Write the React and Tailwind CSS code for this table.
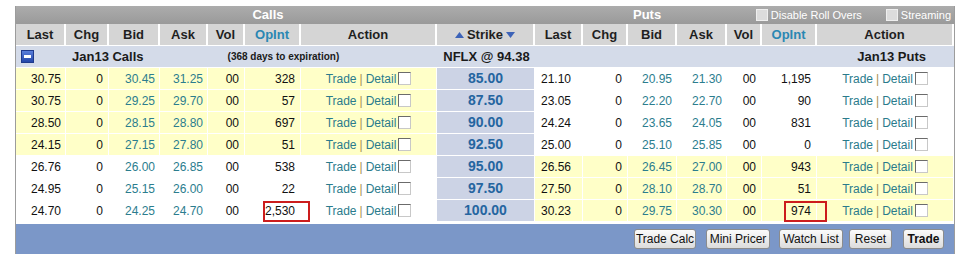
import React from "react";

const cols =
  "grid grid-cols-[50px_43px_51px_48px_37px_56px_136px_98px_48px_45px_49px_50px_35px_55px_137px]";

const calls = [
  ["30.75", "0", "30.45", "31.25", "00", "328"],
  ["30.75", "0", "29.25", "29.70", "00", "57"],
  ["28.50", "0", "28.15", "28.80", "00", "697"],
  ["24.15", "0", "27.15", "27.80", "00", "51"],
  ["26.76", "0", "26.00", "26.85", "00", "538"],
  ["24.95", "0", "25.15", "26.00", "00", "22"],
  ["24.70", "0", "24.25", "24.70", "00", "2,530"],
];

const strikes = ["85.00", "87.50", "90.00", "92.50", "95.00", "97.50", "100.00"];

const puts = [
  ["21.10", "0", "20.95", "21.30", "00", "1,195"],
  ["23.05", "0", "22.20", "22.70", "00", "90"],
  ["24.24", "0", "23.65", "24.05", "00", "831"],
  ["25.00", "0", "25.10", "25.85", "00", "0"],
  ["26.56", "0", "26.45", "27.00", "00", "943"],
  ["27.50", "0", "28.10", "28.70", "00", "51"],
  ["30.23", "0", "29.75", "30.30", "00", "974"],
];

function Box() {
  return (
    <span className="inline-block w-[13px] h-[13px] bg-white border border-t-[#6b6b6b] border-l-[#6b6b6b] border-r-[#c8c8c8] border-b-[#c8c8c8] ml-[2px]" />
  );
}

function Action({ bg }) {
  return (
    <div
      className={`${bg} border-r border-b border-white flex items-center justify-center text-[12px] text-[#2a7b8c]`}
    >
      <span>Trade</span>
      <span className="text-[#a89150] mx-[3px]">|</span>
      <span>Detail</span>
      <Box />
    </div>
  );
}

function Side({ vals, bg, mark, lastPad }) {
  const base = `${bg} border-r border-b border-white flex items-center justify-end pr-[4px] text-[12px]`;
  return (
    <>
      <div className={`${base} text-[#111] ${lastPad || ""}`}>{vals[0]}</div>
      <div className={`${base} text-[#111] pr-[5px]`}>{vals[1]}</div>
      <div className={`${base} text-[#2b7d8e]`}>{vals[2]}</div>
      <div className={`${base} text-[#2b7d8e]`}>{vals[3]}</div>
      <div className={`${base} text-[#111] pr-[5px]`}>{vals[4]}</div>
      <div className={`${base} text-[#111] pr-[5px] relative`}>
        {vals[5]}
        {mark && (
          <span
            className={`absolute top-[1px] h-[21px] border-2 border-[#cc1d1d] ${mark}`}
          />
        )}
      </div>
      <Action bg={bg} />
    </>
  );
}

function Head({ children, className = "" }) {
  return (
    <div
      className={`bg-[#d5d5d5] border-r-2 border-b border-white flex items-center justify-center font-bold text-[13px] text-[#1f1f1f] ${className}`}
    >
      {children}
    </div>
  );
}

function Tri({ down }) {
  return (
    <svg width="9" height="6" viewBox="0 0 9 6" className="mx-[3px]">
      <path d={down ? "M0 0h9L4.5 6z" : "M0 6h9L4.5 0z"} fill="#3d63b8" />
    </svg>
  );
}

function TopCheck({ label, className }) {
  return (
    <div className={`flex items-center ${className}`}>
      <span className="w-[12px] h-[12px] bg-[#dcdcdc] border border-[#efefef] mr-[3px]" />
      <span className="text-white text-[11px]">{label}</span>
    </div>
  );
}

function Btn({ children, bold, w }) {
  return (
    <button
      className={`${w} h-[20px] px-0 rounded-[3px] border border-[#8c8c8c] bg-gradient-to-b from-[#fbfbfb] to-[#dcdcdc] text-[12px] text-[#111] leading-none text-center whitespace-nowrap flex items-center justify-center ${bold ? "font-bold" : ""}`}
    >
      {children}
    </button>
  );
}

export default function App() {
  return (
    <div className="bg-white h-[254px] pt-[6px] font-['Liberation_Sans',Arial,sans-serif]">
      <div className="ml-[15px] w-[940px] border-x border-[#9c9c9c]">
        {/* title bar */}
        <div className="h-[18px] bg-gradient-to-b from-[#acacac] to-[#9a9a9a] flex items-center">
          <div className="w-[504px] text-center text-white font-bold text-[13px]">Calls</div>
          <div className="ml-[113px] text-white font-bold text-[13px]">Puts</div>
          <TopCheck label="Disable Roll Overs" className="ml-auto" />
          <TopCheck label="Streaming" className="ml-[24px] mr-[3px]" />
        </div>

        {/* column headers */}
        <div className={`${cols} h-[22px]`}>
          <Head>Last</Head>
          <Head>Chg</Head>
          <Head>Bid</Head>
          <Head>Ask</Head>
          <Head>Vol</Head>
          <Head className="text-[#2a87b3]">OpInt</Head>
          <Head>Action</Head>
          <Head className="bg-[#ccd3e5]">
            <Tri />
            Strike
            <Tri down />
          </Head>
          <Head>Last</Head>
          <Head>Chg</Head>
          <Head>Bid</Head>
          <Head>Ask</Head>
          <Head>Vol</Head>
          <Head className="text-[#2a87b3]">OpInt</Head>
          <Head className="border-r-0">Action</Head>
        </div>

        {/* expiration row */}
        <div className="h-[22px] bg-[#d4dbe9] border-b border-white flex items-center font-bold text-[#1a1a1a]">
          <span className="ml-[5px] w-[13px] h-[13px] border border-[#1f3a8c] bg-gradient-to-b from-[#5a7fdc] to-[#2446a8] flex items-center justify-center">
            <span className="w-[7px] h-[3px] bg-white" />
          </span>
          <span className="ml-[38px] text-[13px]">Jan13 Calls</span>
          <span className="ml-[84px] text-[10px]">(368 days to expiration)</span>
          <span className="ml-[104px] text-[13px]">NFLX @ 94.38</span>
          <span className="ml-auto mr-[28px] text-[13px]">Jan13 Puts</span>
        </div>

        {/* rows */}
        {strikes.map((s, i) => {
          const callBg = i < 4 ? "bg-[#ffffc8]" : "bg-white";
          const putBg = i < 4 ? "bg-white" : "bg-[#ffffc8]";
          return (
            <div key={s} className={`${cols} h-[22px]`}>
              <Side
                vals={calls[i]}
                bg={callBg}
                mark={i === 6 ? "left-[18px] w-[47px]" : null}
              />
              <div className="bg-[#ccd3e5] border-r border-b border-white flex items-center justify-center font-bold text-[14px] text-[#2565a0]">
                {s}
              </div>
              <Side
                vals={puts[i]}
                bg={putBg}
                lastPad="pr-[11px]"
                mark={i === 6 ? "left-[22px] w-[43px]" : null}
              />
            </div>
          );
        })}

        {/* footer */}
        <div className="mt-[2px] h-[40px] bg-[#7b97c8] flex items-start justify-end pt-[5px] pr-[10px]">
          <Btn w="w-[62px]">Trade Calc</Btn>
          <span className="w-[10px]" />
          <Btn w="w-[64px]">Mini Pricer</Btn>
          <span className="w-[9px]" />
          <Btn w="w-[64px]">Watch List</Btn>
          <span className="w-[6px]" />
          <Btn w="w-[43px]">Reset</Btn>
          <span className="w-[11px]" />
          <Btn bold w="w-[41px]">Trade</Btn>
        </div>
      </div>
    </div>
  );
}
